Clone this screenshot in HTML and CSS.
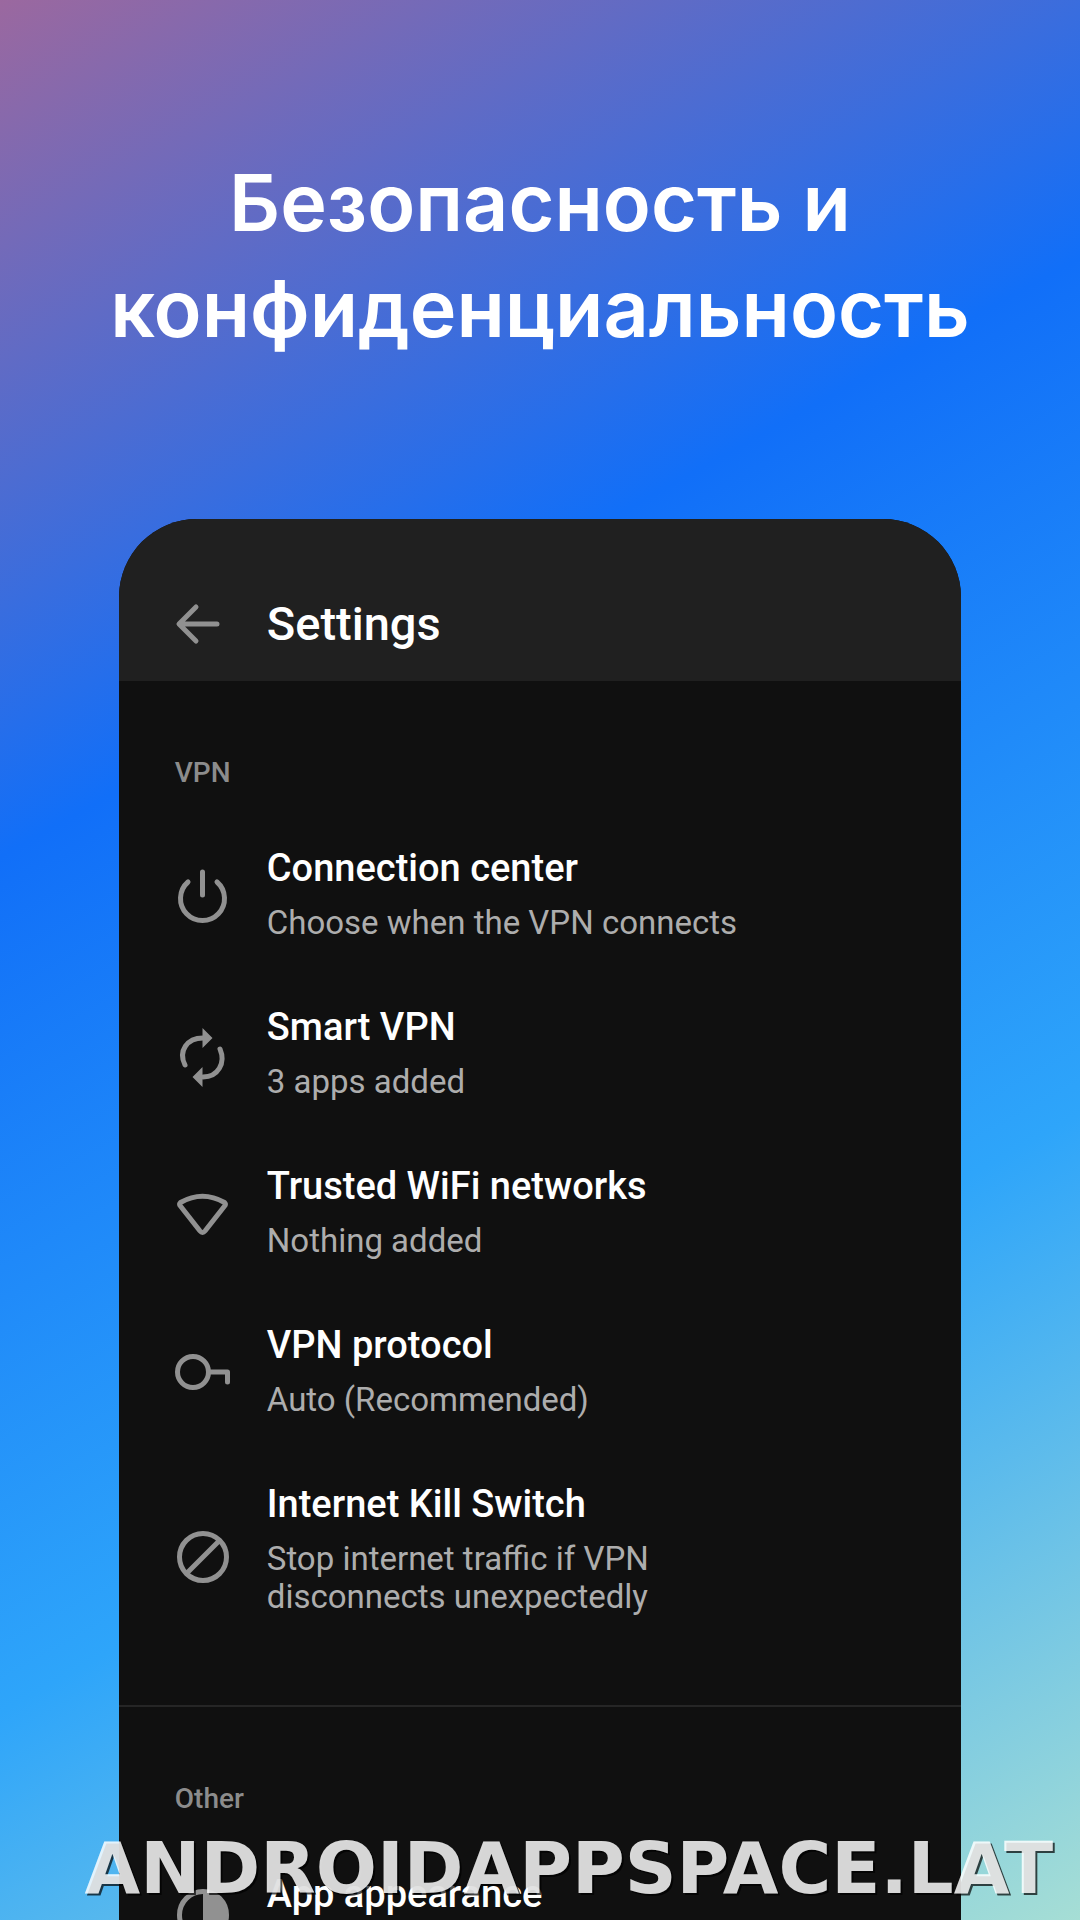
FILE: index.html
```html
<!DOCTYPE html>
<html lang="ru">
<head>
  <meta charset="UTF-8">
  <meta name="viewport" content="width=device-width, initial-scale=1.0">
  <title>Безопасность и конфиденциальность</title>
  <link rel="stylesheet" href="styles.css">
</head>
<body>

  <div class="page">
    <h1 class="headline">Безопасность и<br>конфиденциальность</h1>

    <main class="phone" lang="en">
      <header class="topbar">
        <button class="back" aria-label="Back">
          <svg class="icon" viewBox="0 0 72 56">
            <path d="M50 28H13M29 11L12 28l17 17"/>
          </svg>
        </button>
        <h2 class="topbar-title">Settings</h2>
      </header>

      <section class="section">
        <h3 class="section-title">VPN</h3>

        <button class="item">
          <svg class="icon" viewBox="0 0 72 72">
            <path d="M35.500 13v23M21 23a22 22 0 1 0 29 0"/>
          </svg>
          <span class="item-text">
            <span class="item-title">Connection center</span>
            <span class="item-note">Choose when the VPN connects</span>
          </span>
        </button>

        <button class="item">
          <svg class="icon" viewBox="0 0 72 72">
            <path d="M18 47C11 33 20 20 36 20M53 31c6 14-2 28-17 28"/>
            <path class="solid" d="M35.500 10l10 10-10 10zM35.500 49v20l-10-10z"/>
          </svg>
          <span class="item-text">
            <span class="item-title">Smart VPN</span>
            <span class="item-note">3 apps added</span>
          </span>
        </button>

        <button class="item">
          <svg class="icon" viewBox="0 0 72 72">
            <path d="M13.500 25.500Q35.500 13 57.500 25.500Q59 27 58 28.500L38 54Q35.500 57 33 54L13 28.500Q12 27 13.500 25.500z"/>
          </svg>
          <span class="item-text">
            <span class="item-title">Trusted WiFi networks</span>
            <span class="item-note">Nothing added</span>
          </span>
        </button>

        <button class="item">
          <svg class="icon" viewBox="0 0 72 72">
            <circle cx="26" cy="36" r="15.500"/>
            <path d="M42 36h18.500v10"/>
          </svg>
          <span class="item-text">
            <span class="item-title">VPN protocol</span>
            <span class="item-note">Auto (Recommended)</span>
          </span>
        </button>

        <button class="item">
          <svg class="icon" viewBox="0 0 72 72">
            <circle cx="36" cy="43" r="23.500"/>
            <path d="M20 59l32-32"/>
          </svg>
          <span class="item-text">
            <span class="item-title">Internet Kill Switch</span>
            <span class="item-note">Stop internet traffic if VPN<br>disconnects unexpectedly</span>
          </span>
        </button>
      </section>

      <section class="section">
        <h3 class="section-title">Other</h3>

        <button class="item item-single">
          <svg class="icon" viewBox="0 0 72 72">
            <circle cx="36" cy="42" r="23.500"/>
            <path class="solid" d="M36 18a24 24 0 0 1 0 48z"/>
          </svg>
          <span class="item-text">
            <span class="item-title">App appearance</span>
          </span>
        </button>
      </section>
    </main>

    <div class="watermark">ANDROIDAPPSPACE.LAT</div>
  </div>

</body>
</html>
```
FILE: styles.css
```css
* {
  box-sizing: border-box;
}

body {
  margin: 0;
  font-family: Roboto, sans-serif;
}

.page {
  position: relative;
  height: 100vh;
  padding-top: 149px;
  overflow: hidden;
  background: linear-gradient(151deg, #9b689f 0%, #116ff8 34%, #2ea5fa 68%, #a6ded5 100%);
}

.headline {
  margin: 0 0 158px;
  font-family: Inter, sans-serif;
  font-size: 79px;
  font-weight: 600;
  line-height: 106px;
  text-align: center;
  color: #fff;
}

.phone {
  width: 78%;
  margin: 0 auto;
  border-radius: 78px 78px 0 0;
  overflow: hidden;
  background-color: #101010;
  color: #fff;
}

.topbar {
  display: flex;
  align-items: center;
  gap: 28px;
  padding: 77px 48px 29px;
  background-color: #202020;
}

.topbar-title {
  margin: 0;
  font-size: 47px;
  font-weight: 500;
  line-height: 56px;
}

.back,
.item {
  border: none;
  padding: 0;
  background: none;
  color: inherit;
  font-family: inherit;
  text-align: left;
  cursor: pointer;
}

.back {
  display: flex;
}

.icon {
  flex: none;
  width: 72px;
  fill: none;
  stroke: #919191;
  stroke-width: 5;
  stroke-linecap: round;
  stroke-linejoin: round;
}

.icon .solid {
  fill: #919191;
  stroke: none;
}

.section {
  padding: 76px 0 57px;
}

.section + .section {
  border-top: 2px solid #262626;
}

.section-title {
  margin: 0 56px 26px;
  font-size: 28px;
  font-weight: 500;
  line-height: 32px;
  color: #8c8c8c;
}

.item {
  display: flex;
  align-items: center;
  gap: 28px;
  width: 100%;
  padding: 32px 48px;
}

.item-single {
  align-items: flex-start;
}

.item-text {
  display: flex;
  flex-direction: column;
  gap: 15px;
}

.item-title {
  font-size: 38px;
  font-weight: 500;
  line-height: 42px;
}

.item-note {
  font-size: 33px;
  line-height: 38px;
  color: #adadad;
}

/* sits over the bottom edge of the phone */
.watermark {
  position: absolute;
  right: 27px;
  bottom: 8px;
  font-family: "DejaVu Sans", sans-serif;
  font-size: 72px;
  font-weight: bold;
  line-height: 88px;
  white-space: nowrap;
  color: rgba(255, 255, 255, 0.84);
  text-shadow: 2px 2px 0 rgba(0, 0, 0, 0.7);
}
```
